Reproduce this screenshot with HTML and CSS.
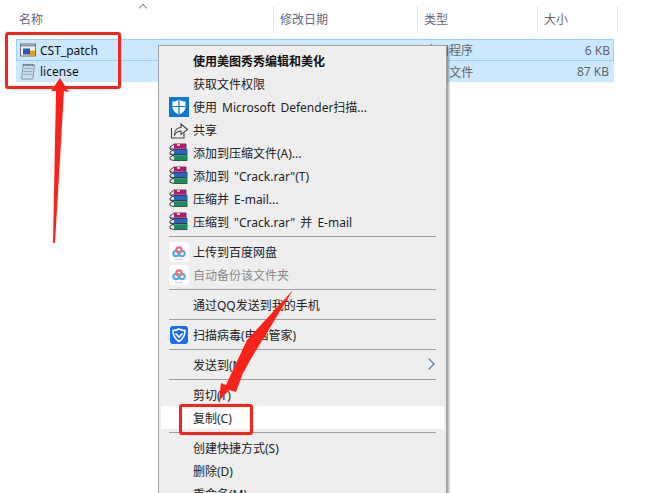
FILE: index.html

```html
<!DOCTYPE html>
<html lang="zh-CN">
<head>
  <meta charset="UTF-8" />
  <title>Crack</title>
  <link rel="stylesheet" href="styles.css">
</head>
<body>

  <!-- Shared icons -->
  <svg class="defs" width="0" height="0">
    <symbol id="rar" viewBox="0 0 20 20">
      <path d="M1 4 L5 1 H17 V6 H5 L1 6 Z" fill="#e6e6e6" stroke="#222" stroke-width="0.800" />
      <path d="M5 1 H17 V5.500 H5 Z" fill="#b5147a" />
      <path d="M8 1 h3 v2 h-3 z" fill="#f2d060" />
      <path d="M1 9 L5 6.500 H18 V11.500 H5 L1 11 Z" fill="#e6e6e6" stroke="#222" stroke-width="0.800" />
      <path d="M5 7 H18 V11 H5 Z" fill="#2266c8" />
      <path d="M1 14 L5 12 H18 V17.500 H5 L1 16.500 Z" fill="#e6e6e6" stroke="#222" stroke-width="0.800" />
      <path d="M5 12.500 H18 V17 H5 Z" fill="#12915a" />
      <path d="M1 6 L5 8 M1 11 L5 13" fill="none" stroke="#222" stroke-width="0.800" />
    </symbol>
    <symbol id="baidu" viewBox="0 0 20 20">
      <rect width="20" height="20" rx="4" fill="#fff" />
      <circle cx="7" cy="11.500" r="2.700" fill="none" stroke="#4aaeea" stroke-width="2.200" />
      <circle cx="13" cy="11.500" r="2.700" fill="none" stroke="#4aaeea" stroke-width="2.200" />
      <circle cx="10" cy="8" r="2.700" fill="none" stroke="#e8707c" stroke-width="2.200" />
      <path d="M6 17.500 H14" stroke="#f6c4cc" stroke-width="1.200" />
    </symbol>
  </svg>

  <div class="explorer">
    <div class="header-row">
      <div class="col-head col-name">名称<span class="sort-caret"></span></div>
      <div class="col-head">修改日期</div>
      <div class="col-head">类型</div>
      <div class="col-head">大小</div>
    </div>

    <div class="file-row first">
      <div class="file-name">
        <svg class="file-icon" viewBox="0 0 16 16">
          <rect x="0.500" y="1.500" width="15" height="12" fill="#eef1f5" stroke="#6a7380" />
          <rect x="1" y="2" width="14" height="2" fill="#8d99a8" />
          <rect x="3" y="6" width="7" height="6" fill="#1f5fb8" />
          <path d="M10 8 h5 v5 h-3 l-2 2 z" fill="#e8a020" />
        </svg>
        CST_patch
      </div>
      <div></div>
      <div class="file-type">应用程序</div>
      <div class="file-size">6 KB</div>
    </div>
    <div class="file-row">
      <div class="file-name">
        <svg class="file-icon" viewBox="0 0 16 18">
          <path d="M3 2 H15 L13 17 H1 Z" fill="#c9dcea" stroke="#7f95a8" />
          <path d="M4 6 H13 M3.500 9 H12.500 M3 12 H12" stroke="#8fa9bd" />
          <path d="M3 1 V3 M5 1 V3 M7 1 V3 M9 1 V3 M11 1 V3 M13 1 V3" stroke="#555" />
        </svg>
        license
      </div>
      <div></div>
      <div class="file-type">DAT 文件</div>
      <div class="file-size">87 KB</div>
    </div>
  </div>

  <!-- Context menu -->
  <div class="menu">
    <div class="menu-item bold"><span class="menu-icon"></span>使用美图秀秀编辑和美化</div>
    <div class="menu-item"><span class="menu-icon"></span>获取文件权限</div>
    <div class="menu-item">
      <span class="menu-icon">
        <svg viewBox="0 0 20 20" width="20" height="20">
          <rect width="20" height="20" fill="#0a78d4" />
          <path d="M10 2.500 C12 4 14 4.500 16.500 4.500 V10 C16.500 13.500 13.500 16 10 17.500 C6.500 16 3.500 13.500 3.500 10 V4.500 C6 4.500 8 4 10 2.500 Z" fill="#fff" />
          <path d="M10 2.500 V17.500 M3.500 9.500 H16.500" stroke="#0a78d4" stroke-width="1.200" />
        </svg>
      </span>
      使用 Microsoft Defender扫描...
    </div>
    <div class="menu-item">
      <span class="menu-icon">
        <svg viewBox="0 0 20 20" width="20" height="20" fill="none" stroke="#444" stroke-width="1.100">
          <path d="M2.500 8 V18 H15 V13" />
          <path d="M5.500 15 C5.500 9.500 9 7.500 12 7.500 V4 L18.500 9.500 L12 14.500 V11 C9.500 11 7 12.500 5.500 15 Z" />
        </svg>
      </span>
      共享
    </div>
    <div class="menu-item"><span class="menu-icon"><svg class="rar-icon"><use href="#rar" /></svg></span>添加到压缩文件(A)...</div>
    <div class="menu-item"><span class="menu-icon"><svg class="rar-icon"><use href="#rar" /></svg></span>添加到 "Crack.rar"(T)</div>
    <div class="menu-item"><span class="menu-icon"><svg class="rar-icon"><use href="#rar" /></svg></span>压缩并 E-mail...</div>
    <div class="menu-item"><span class="menu-icon"><svg class="rar-icon"><use href="#rar" /></svg></span>压缩到 "Crack.rar" 并 E-mail</div>
    <div class="menu-sep"></div>
    <div class="menu-item"><span class="menu-icon"><svg class="rar-icon"><use href="#baidu" /></svg></span>上传到百度网盘</div>
    <div class="menu-item disabled"><span class="menu-icon"><svg class="rar-icon"><use href="#baidu" /></svg></span>自动备份该文件夹</div>
    <div class="menu-sep"></div>
    <div class="menu-item"><span class="menu-icon"></span>通过QQ发送到我的手机</div>
    <div class="menu-sep"></div>
    <div class="menu-item">
      <span class="menu-icon">
        <svg viewBox="0 0 20 20" width="20" height="20">
          <rect x="1" y="1" width="18" height="18" rx="3" fill="#1a6cf0" />
          <path d="M10 4 C12 5 14 5.500 16 5.500 C16 10 14 14 10 16.500 C6 14 4 10 4 5.500 C6 5.500 8 5 10 4 Z" fill="none" stroke="#fff" stroke-width="1.600" />
          <path d="M6.500 8.500 L10 12 L13.500 8.500" fill="none" stroke="#fff" stroke-width="1.600" />
        </svg>
      </span>
      扫描病毒(电脑管家)
    </div>
    <div class="menu-sep"></div>
    <div class="menu-item"><span class="menu-icon"></span>发送到(N)<span class="submenu-arrow"></span></div>
    <div class="menu-sep"></div>
    <div class="menu-item"><span class="menu-icon"></span>剪切(T)</div>
    <div class="menu-item active"><span class="menu-icon"></span>复制(C)</div>
    <div class="menu-sep"></div>
    <div class="menu-item"><span class="menu-icon"></span>创建快捷方式(S)</div>
    <div class="menu-item"><span class="menu-icon"></span>删除(D)</div>
    <div class="menu-item"><span class="menu-icon"></span>重命名(M)</div>
  </div>

  <!-- Red annotations drawn on top of the screenshot -->
  <div class="mark mark-files"></div>
  <div class="mark mark-copy"></div>
  <svg class="arrows" width="666" height="493" viewBox="0 0 666 493">
    <path d="M60 78 L69 92 L64 91 L55 243 L53 243 L56 91 L51 91 Z" fill="#f9231a" />
    <path d="M293 290 L252 357 L243 373 L236 392 L229 390 L219 401 L221 383 L226 385 L247 340 Z" fill="#f9231a" />
  </svg>

</body>
</html>
```

FILE: styles.css

```css
* { margin: 0; padding: 0; box-sizing: border-box; }
html, body {
  height: 100%;
  overflow: hidden;
  background: #fff;
  font-family: "Noto Sans", "Noto Sans CJK SC", sans-serif;
  font-size: 12px;
}
.defs { position: absolute; }

.explorer { padding: 6px 0 0 16px; }
.header-row {
  display: grid;
  grid-template-columns: 258px 144px 120px 80px;
  width: 602px;
  height: 27px;
  margin-bottom: 6px;
}
.col-head {
  position: relative;
  padding-left: 6px;
  line-height: 27px;
  color: #667;
  border-right: 1px solid #e5e5e5;
}
.col-name { padding-left: 3px; }
.sort-caret {
  position: absolute;
  left: 124px;
  top: -1px;
  width: 6px;
  height: 6px;
  border-left: 1px solid #888;
  border-top: 1px solid #888;
  transform: rotate(45deg);
}

.file-row {
  display: grid;
  grid-template-columns: 258px 144px 120px 76px;
  width: 598px;
  height: 21px;
  align-items: center;
  background: #cce8ff;
  color: #666;
}
.file-row.first {
  height: 22px;
  border: 1px solid #99d1ff;
}
.file-name {
  display: flex;
  align-items: center;
  gap: 4px;
  padding-left: 4px;
  color: #111;
}
.file-row.first .file-name { padding-left: 3px; }
.file-icon { width: 16px; height: 17px; }
.file-type { padding-left: 6px; }
.file-size { text-align: right; padding-right: 5px; }

.menu {
  position: absolute;
  left: 158px;
  top: 45px;
  width: 289px;
  height: 470px;
  padding: 3px 2px;
  background: #eeeeee;
  border: 1px solid #a0a0a0;
  box-shadow: 2px 2px 2px rgba(0, 0, 0, 0.35);
  color: #222;
  word-spacing: 2px;
}
.menu-item {
  position: relative;
  display: flex;
  align-items: center;
  height: 23px;
  padding-left: 8px;
}
.menu-item.bold { font-weight: bold; color: #111; }
.menu-item.disabled { color: #8a8a8a; }
.menu-item.active { background: #fff; }
.menu-icon {
  display: flex;
  align-items: center;
  width: 24px;
  height: 20px;
  flex-shrink: 0;
}
.rar-icon { width: 20px; height: 20px; }
.menu-sep {
  height: 1px;
  margin: 3px 8px;
  background: #a0a0a0;
}
.submenu-arrow {
  position: absolute;
  right: 11px;
  top: 7px;
  width: 8px;
  height: 8px;
  border-right: 1px solid #3a6ea5;
  border-top: 1px solid #3a6ea5;
  transform: rotate(45deg);
}

.mark {
  position: absolute;
  border: 3px solid #f9231a;
  border-radius: 3px;
}
.mark-files { left: 5px; top: 32px; width: 116px; height: 57px; }
.mark-copy { left: 179px; top: 404px; width: 74px; height: 31px; }
.arrows { position: absolute; left: 0; top: 0; }
```
